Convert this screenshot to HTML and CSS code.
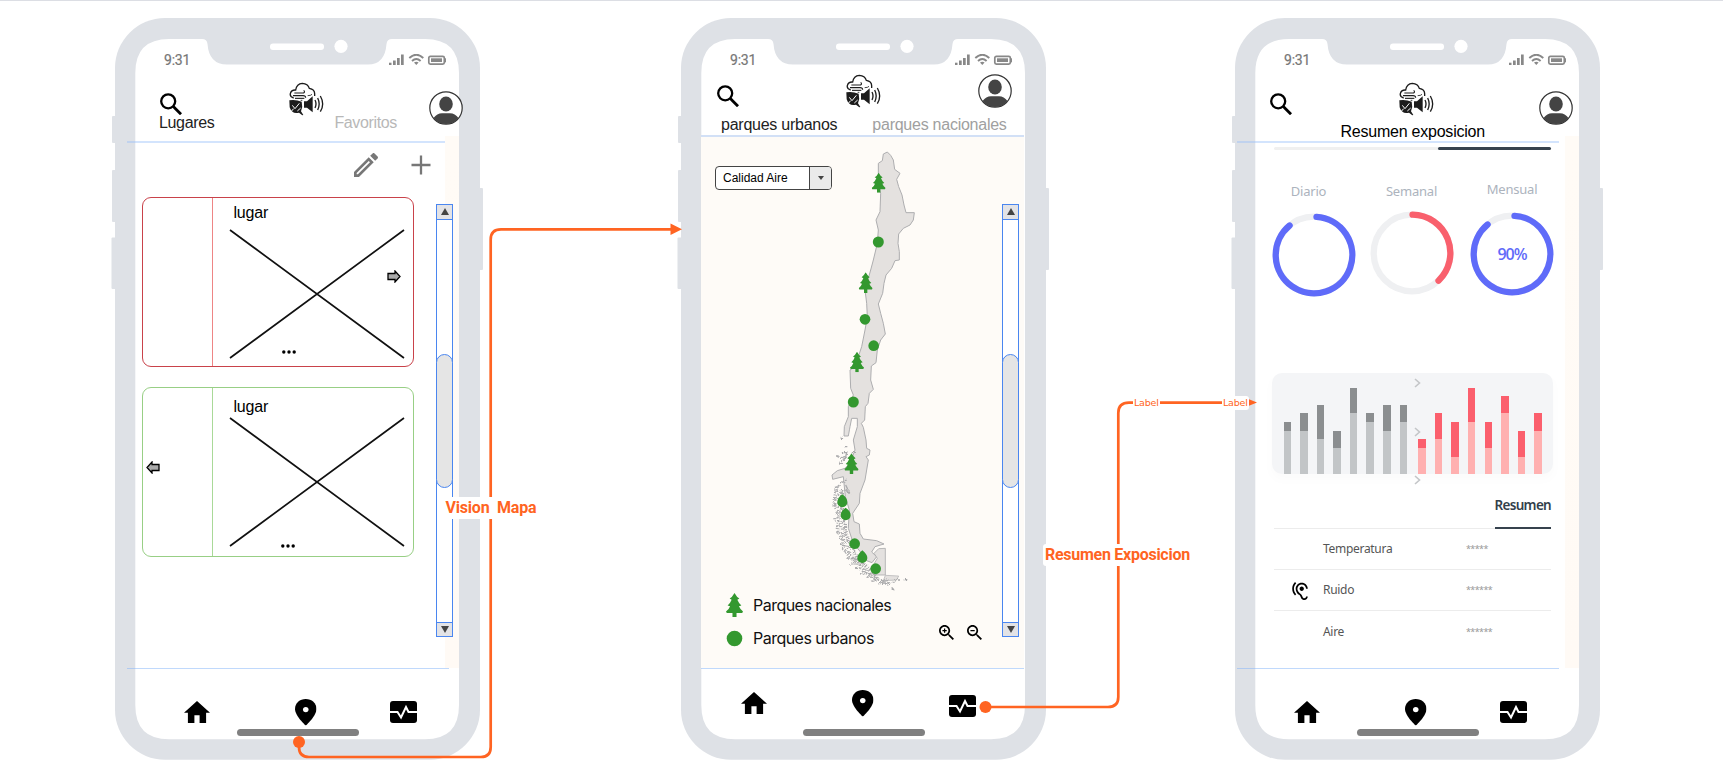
FILE: index.html
```html
<!DOCTYPE html>
<html lang="es">
<head>
<meta charset="utf-8">
<title>Prototipo</title>
<link rel="stylesheet" href="styles.css">
</head>
<body>
<svg class="defs" width="0" height="0">
  <defs>
    <symbol id="frame" viewBox="0 0 373 742">
      <g fill="#dee1e6">
        <rect x="1" y="98" width="10" height="27" rx="1"/><rect x="1" y="152" width="10" height="52" rx="1"/><rect x="0.5" y="219.500" width="10" height="51.500" rx="1"/>
        <rect x="362" y="170" width="10" height="82" rx="1"/>
        <rect x="4" y="0" width="365" height="741.700" rx="50"/>
      </g>
      <path fill="#fff" d="M58 21H91Q96 21 96.500 26Q98 46.500 116 46.500H257Q274 46.500 275.500 26Q276 21 281 21H314Q348 21 348 55V687Q348 721.300 314 721.300H58Q24.300 721.300 24.300 687V55Q24.300 21 58 21Z"/>
      <rect x="159" y="25.500" width="54" height="6.500" rx="3" fill="#fff"/><circle cx="230" cy="28.300" r="6.600" fill="#fff"/>
    </symbol>
    <symbol id="signals" viewBox="0 0 57 12">
      <g fill="#888"><rect x="0" y="8.700" width="2.500" height="2.300"/><rect x="4" y="6.500" width="2.700" height="4.500"/><rect x="8" y="4" width="2.700" height="7"/><rect x="12" y="0.500" width="2.700" height="10.500"/></g>
      <g fill="none" stroke="#888" stroke-width="1.900"><path d="M20.300 4Q27.300 -2.500 34.300 4"/><path d="M23 7Q27.300 3 31.600 7"/></g>
      <path d="M25 8.500Q27.300 7 29.600 8.500L27.300 11Z" fill="#888"/>
      <rect x="39.800" y="2.300" width="15.500" height="7.800" rx="1.500" fill="none" stroke="#888" stroke-width="1.700"/><rect x="42" y="4.300" width="11" height="3.700" fill="#888"/><rect x="56" y="4.300" width="1" height="4" fill="#888"/>
    </symbol>
    <symbol id="search" viewBox="0 0 22 22"><circle cx="8.200" cy="8.300" r="7" fill="none" stroke="#000" stroke-width="2.300"/><path d="M13.300 13.500L21 21.300" stroke="#000" stroke-width="2.800"/></symbol>
    <symbol id="logo" viewBox="0 0 105 100">
      <g fill="none" stroke="#1c1c1c" stroke-width="4">
        <path d="M14 47Q2 43 4 34Q7 22 20 23Q23 4 40 3Q57 4 61 18Q77 21 77 34V41" />
        <path d="M16 32H44Q49 29 44 24M12 40H42Q50 40 50 46" stroke-width="3.300"/><path d="M18 48H46" stroke-width="3.300"/><path d="M35 54H40M56 40Q66 40 69 36" stroke-width="2.500"/>
        <path d="M78 53Q84 65 78 77M86 47Q95 65 86 83M94 41Q108 65 94 88"/>
      </g>
      <path d="M1 54Q20 51 38 58Q42 72 36 87L43 98L40 99L30 91Q9 97 2 75Z" fill="#1c1c1c"/>
      <path d="M10 69L18 79L31 63M6 88L14 79M25 86L35 77" fill="none" stroke="#fff" stroke-width="3"/>
      <path d="M45 57H54L71 42V90L54 76H45Z" fill="#1c1c1c"/>
    </symbol>
    <symbol id="avatar" viewBox="0 0 34 34">
      <circle cx="17" cy="17" r="16.200" fill="#fff" stroke="#333" stroke-width="1.200"/>
      <ellipse cx="17" cy="13" rx="6.800" ry="7.600" fill="#444"/><path d="M4.500 27Q8 22.300 13 22.300H21Q26 22.300 29.500 27Q25 33 17 33T4.500 27Z" fill="#444"/>
    </symbol>
    <symbol id="home" viewBox="2 3 20 17" preserveAspectRatio="none"><path d="M10 20v-6h4v6h5v-8h3L12 3 2 12h3v8z"/></symbol>
    <symbol id="pin" viewBox="5 2 14 20" preserveAspectRatio="none"><path d="M12 2C8.130 2 5 5.130 5 9.500c0 5.250 7 12.500 7 12.500s7-7.250 7-12.500C19 5.130 15.870 2 12 2z"/><ellipse cx="12" cy="10" rx="1.800" ry="2" fill="#fff"/></symbol>
    <symbol id="pulse" viewBox="0 0 27 22"><rect width="27" height="22" rx="3"/><path d="M0 11H7.500L11 16.500L16 6L18.500 11H27" fill="none" stroke="#fff" stroke-width="2"/></symbol>
    <symbol id="tree" viewBox="0 0 42 60" preserveAspectRatio="none"><path fill="#33982f" d="M21 0Q27 11 33 14L28 17Q31 25 38 31L32 33Q36 42 42 46L40 50H26V60H16V50H2L0 46Q7 42 10 33L4 31Q11 25 14 17L9 14Q15 11 21 0Z"/></symbol>
    <symbol id="arrow" viewBox="0 0 14 13"><path d="M1 3.500H8V1L13 6.500L8 12V9.500H1Z" fill="#aaa" stroke="#000" stroke-width="1.300"/></symbol>
    <symbol id="chev" viewBox="0 0 7 10"><path d="M1 1L5.500 5L1 9" fill="none" stroke="#c4c6c8" stroke-width="1.600"/></symbol>
    <symbol id="zoom" viewBox="3 3 17.500 17.500"><path d="M15.500 14h-.79l-.28-.27C15.410 12.590 16 11.110 16 9.500 16 5.910 13.090 3 9.500 3S3 5.910 3 9.500 5.910 16 9.500 16c1.610 0 3.090-.59 4.230-1.570l.27.280v.79l5 4.990L20.490 19l-4.990-5zm-6 0C7.010 14 5 11.990 5 9.500S7.010 5 9.500 5 14 7.010 14 9.500 11.990 14 9.500 14zM7 8.700h5v1.600H7z"/></symbol>
    <filter id="rough" x="-20%" y="-20%" width="140%" height="140%"><feTurbulence type="fractalNoise" baseFrequency="0.3" numOctaves="2" seed="4"/><feDisplacementMap in="SourceGraphic" scale="11" xChannelSelector="R" yChannelSelector="G"/></filter>
    <filter id="coast" x="-10%" y="-10%" width="120%" height="120%"><feTurbulence type="fractalNoise" baseFrequency="0.15" numOctaves="2" seed="9"/><feDisplacementMap in="SourceGraphic" scale="4" xChannelSelector="R" yChannelSelector="G"/></filter>
  </defs>
</svg>

<main class="board">
  <section class="phone phone-1">
    <svg class="frame"><use href="#frame"/></svg>
    <div class="screen">
      <div class="status"><span>9:31</span><svg class="signals"><use href="#signals"/></svg></div>
      <header class="top">
        <div class="tools">
          <svg class="search"><use href="#search"/></svg>
          <svg class="logo"><use href="#logo"/></svg>
          <svg class="avatar"><use href="#avatar"/></svg>
        </div>
        <nav class="tabs"><span class="tab">Lugares</span><span class="tab off">Favoritos</span></nav>
      </header>
      <div class="body">
        <div class="list">
          <div class="actions">
            <svg width="24" height="24" viewBox="3 3 18 18"><path fill="#777" d="M14.060 9.020l.92.920L5.920 19H5v-.92l9.060-9.060M17.660 3c-.25 0-.51.100-.7.290l-1.830 1.830 3.750 3.750 1.830-1.830c.39-.39.39-1.020 0-1.410l-2.340-2.340c-.2-.2-.45-.29-.71-.29zm-3.600 3.190L3 17.250V21h3.750L17.810 9.940l-3.750-3.750z"/></svg>
            <svg width="20" height="20" viewBox="0 0 20 20"><path d="M10 0.500V19.500M0.500 10H19.500" stroke="#777" stroke-width="2.300"/></svg>
          </div>
          <article class="card red">
            <div class="side"></div>
            <div class="content">
              <h2>lugar</h2>
              <svg class="cross" viewBox="0 0 174 128"><path d="M0 0L174 128M174 0L0 128" stroke="#111" stroke-width="1.700"/></svg>
              <svg class="go"><use href="#arrow"/></svg>
              <svg class="dots" viewBox="0 0 14 4"><circle cx="1.800" cy="2" r="1.700"/><circle cx="7" cy="2" r="1.700"/><circle cx="12.200" cy="2" r="1.700"/></svg>
            </div>
          </article>
          <article class="card green">
            <div class="side"><svg class="back"><use href="#arrow"/></svg></div>
            <div class="content">
              <h2>lugar</h2>
              <svg class="cross" viewBox="0 0 174 128"><path d="M0 0L174 128M174 0L0 128" stroke="#111" stroke-width="1.700"/></svg>
              <svg class="dots" viewBox="0 0 14 4"><circle cx="1.800" cy="2" r="1.700"/><circle cx="7" cy="2" r="1.700"/><circle cx="12.200" cy="2" r="1.700"/></svg>
            </div>
          </article>
        </div>
        <div class="scrollbar"><span class="btn up"></span><span class="thumb"></span><span class="btn down"></span></div>
      </div>
      <footer class="bottom">
        <svg class="home"><use href="#home"/></svg><svg class="pin"><use href="#pin"/></svg><svg class="pulse"><use href="#pulse"/></svg>
      </footer>
      <div class="grip"></div>
    </div>
  </section>

  <section class="phone phone-2">
    <svg class="frame"><use href="#frame"/></svg>
    <div class="screen">
      <div class="status"><span>9:31</span><svg class="signals"><use href="#signals"/></svg></div>
      <header class="top">
        <div class="tools">
          <svg class="search"><use href="#search"/></svg>
          <svg class="logo"><use href="#logo"/></svg>
          <svg class="avatar"><use href="#avatar"/></svg>
        </div>
        <nav class="tabs"><span class="tab">parques urbanos</span><span class="tab off">parques nacionales</span></nav>
      </header>
      <div class="body map">
        <svg class="chile" viewBox="0 0 420 1410">
          <g filter="url(#coast)"><path fill="#e4e1df" stroke="#adadaf" stroke-width="3" stroke-linejoin="round" d="M235 70L247 62L250 42L262 36L272 46L280 60L284 88L300 100L290 118L296 140L306 165L312 195L318 218L343 218L340 240L330 255L310 265L296 282L294 310L298 335L298 360L285 362L275 385L258 405L252 430L248 460L235 492L242 520L250 550L256 582L242 600L232 630L228 668L214 678L212 720L220 748L208 760L204 790L196 800L194 840L184 850L190 862L198 900L200 925L210 930L208 945L198 950L205 960L200 990L195 1020L180 1060L178 1090L158 1120L162 1145L178 1152L180 1180L190 1197L230 1202L252 1212L225 1220L215 1236L230 1250L216 1268L200 1262L185 1240L160 1210L145 1165L148 1110L136 1070L130 1010L98 1018L96 1005L112 992L135 985L150 970L165 930L160 900L172 860L172 835L155 835L150 860L145 888L132 888L133 860L145 830L145 800L160 765L152 745L150 690L165 680L185 620L195 570L202 530L200 490L195 450L212 390L220 360L232 310L235 270L228 240L240 215L242 160L235 130Z"/>
          <path d="M256 1225V1305H222L240 1290L220 1275L232 1255L222 1240L236 1226Z" fill="#e4e1df" stroke="#adadaf" stroke-width="2.500"/><path d="M256 1306L296 1308L290 1320L250 1322Z" fill="#e4e1df" stroke="#adadaf" stroke-width="2"/></g>
          <g filter="url(#rough)" fill="none" stroke="#a9a9ab" stroke-width="3">
            <path d="M103 1045L118 1035L108 1060L130 1055L98 1080L124 1078L97 1098L128 1100L106 1120L135 1118L100 1140L132 1145L108 1160L140 1160L108 1178L138 1182L118 1198L148 1202L120 1215L150 1220L130 1235L162 1238L140 1255L175 1255L150 1272L188 1272L165 1285L200 1288L180 1302L218 1300L200 1312L236 1312L215 1324L262 1320L235 1332L288 1326" stroke-dasharray="26 3 13 4"/>
            <path d="M110 1040L103 1090L118 1130L112 1170L130 1200L128 1222L150 1250L175 1270L198 1296L230 1318L270 1334" stroke-width="11" stroke-dasharray="3 5"/>
            <path d="M128 1050L122 1090L137 1140L135 1175L155 1220L170 1252L205 1285L230 1308" stroke-width="11" stroke-dasharray="4 4"/>
            <path d="M122 895H130M135 920H142M124 938H140L136 955L112 950M125 965L140 950M154 938H166M108 948H116M118 970H126M275 1342L282 1350M310 1319H322M285 1320H300M120 1030L140 1020M137 1035L149 1060L135 1050" stroke-width="4"/>
          </g>
          <g fill="#33982f"><circle cx="235" cy="306" r="16.500"/><circle cx="195" cy="538" r="16"/><circle cx="221" cy="617" r="16"/><circle cx="160" cy="786" r="16.500"/><circle cx="164" cy="1211" r="16"/><circle cx="227" cy="1286" r="16"/>
          <path d="M127 1063Q142 1073 142 1087A15 15 0 0 1 112 1087Q112 1073 127 1063ZM137 1103Q152 1113 152 1126A15 15 0 0 1 122 1126Q122 1113 137 1103ZM187 1231Q202 1243 202 1254A15 15 0 0 1 172 1254Q172 1243 187 1231Z"/></g>
          <use href="#tree" x="215" y="98" width="42" height="60"/><use href="#tree" x="176" y="397" width="42" height="62"/><use href="#tree" x="150" y="635" width="42" height="62"/><use href="#tree" x="133" y="940" width="43" height="62"/>
        </svg>
        <div class="select"><span>Calidad Aire</span><i></i></div>
        <ul class="legend">
          <li><svg width="17" height="24"><use href="#tree"/></svg>Parques nacionales</li>
          <li><svg width="17" height="17" viewBox="0 0 17 17"><circle cx="8.500" cy="8.500" r="7.800" fill="#33982f"/></svg>Parques urbanos</li>
        </ul>
        <div class="zooms"><svg viewBox="0 0 15 15"><use href="#zoom"/><path d="M5.600 3.400V7.700" stroke="#000" stroke-width="1.200"/></svg><svg viewBox="0 0 15 15"><use href="#zoom"/></svg></div>
        <div class="scrollbar"><span class="btn up"></span><span class="thumb"></span><span class="btn down"></span></div>
      </div>
      <footer class="bottom">
        <svg class="home"><use href="#home"/></svg><svg class="pin"><use href="#pin"/></svg><svg class="pulse"><use href="#pulse"/></svg>
      </footer>
      <div class="grip"></div>
    </div>
  </section>

  <section class="phone phone-3">
    <svg class="frame"><use href="#frame"/></svg>
    <div class="screen">
      <div class="status"><span>9:31</span><svg class="signals"><use href="#signals"/></svg></div>
      <header class="top">
        <div class="tools">
          <svg class="search"><use href="#search"/></svg>
          <svg class="logo"><use href="#logo"/></svg>
          <svg class="avatar"><use href="#avatar"/></svg>
        </div>
        <h1 class="tabs">Resumen exposicion</h1>
      </header>
      <div class="body report">
        <div class="progress"><span></span></div>
        <div class="rings">
          <figure><figcaption>Diario</figcaption><svg viewBox="0 0 84 84"><circle cx="42" cy="42" r="38.300" stroke="#eff0f2"/><path d="M44.500 3.800A38.300 38.300 0 1 1 17.600 12.500" stroke="#5f6bf9"/></svg></figure>
          <figure><figcaption>Semanal</figcaption><svg viewBox="0 0 84 84"><circle cx="42" cy="42" r="38.300" stroke="#eff0f2"/><path d="M42.500 3.700A38.300 38.300 0 0 1 68.500 69.700" stroke="#f9606d"/></svg></figure>
          <figure class="raised"><figcaption>Mensual</figcaption><svg viewBox="0 0 84 84"><circle cx="42" cy="42" r="38.300" stroke="#eff0f2"/><path d="M44.500 3.800A38.300 38.300 0 1 1 17.600 12.500" stroke="#5f6bf9"/></svg><b>90%</b></figure>
        </div>
        <div class="chart">
          <div class="bars gray">
            <i style="--t:6;--l:5"></i><i style="--t:7;--l:5"></i><i style="--t:8;--l:4"></i><i style="--t:5;--l:3"></i><i style="--t:10;--l:7"></i><i style="--t:7;--l:6"></i><i style="--t:8;--l:5"></i><i style="--t:8;--l:6"></i>
          </div>
          <div class="bars pink">
            <i style="--t:4;--l:3"></i><i style="--t:7;--l:4"></i><i style="--t:6;--l:2"></i><i style="--t:10;--l:6"></i><i style="--t:6;--l:3"></i><i style="--t:9;--l:7"></i><i style="--t:5;--l:2"></i><i style="--t:7;--l:5"></i>
          </div>
          <div class="chevs"><svg><use href="#chev"/></svg><svg><use href="#chev"/></svg><svg><use href="#chev"/></svg></div>
        </div>
        <div class="caption"><span>Resumen</span></div>
        <div class="row"><span></span><span>Temperatura</span><em>*****</em></div>
        <div class="row"><svg width="16" height="18" viewBox="3 1.200 18 20.800"><path d="M17 20c-.29 0-.56-.06-.76-.15-.71-.37-1.210-.88-1.710-2.380-.51-1.560-1.470-2.290-2.390-3-.79-.61-1.610-1.240-2.320-2.530C9.290 10.980 9 9.930 9 9c0-2.800 2.200-5 5-5s5 2.200 5 5h2c0-3.930-3.070-7-7-7S7 5.070 7 9c0 1.260.38 2.650 1.070 3.900.91 1.650 1.980 2.480 2.850 3.150.81.620 1.390 1.070 1.710 2.050.6 1.820 1.370 2.840 2.730 3.550.51.230 1.070.35 1.640.35 2.210 0 4-1.790 4-4h-2c0 1.100-.9 2-2 2zM7.640 2.640L6.220 1.220C4.230 3.210 3 5.960 3 9s1.230 5.790 3.220 7.780l1.410-1.410C6.010 13.740 5 11.490 5 9s1.010-4.740 2.640-6.360zM11.500 9c0 1.380 1.120 2.500 2.500 2.500s2.500-1.120 2.500-2.500-1.120-2.500-2.500-2.500-2.500 1.120-2.500 2.500z"/></svg><span>Ruido</span><em>******</em></div>
        <div class="row"><span></span><span>Aire</span><em>******</em></div>
      </div>
      <footer class="bottom">
        <svg class="home"><use href="#home"/></svg><svg class="pin"><use href="#pin"/></svg><svg class="pulse"><use href="#pulse"/></svg>
      </footer>
      <div class="grip"></div>
    </div>
  </section>

  <svg class="links" viewBox="0 0 1723 782">
    <g fill="none" stroke="#ff6422" stroke-width="2.700"><path d="M299 742V747Q299 757 309 757H481Q490.700 757 490.700 747V239.500Q490.700 229.300 501 229.300H672"/><path d="M985.500 707H1108Q1118.300 707 1118.300 697V413Q1118.300 402.600 1129 402.600H1252"/></g>
    <g fill="#ff6422"><circle cx="299" cy="742" r="6"/><circle cx="985.500" cy="707" r="6"/><path d="M670.500 223.500L682 229.300L670.500 235ZM1249 399.300L1257 402.600L1249 405.800Z"/></g>
  </svg>
  <span class="label vision">Vision&nbsp; Mapa</span>
  <span class="label resumen">Resumen Exposicion</span>
  <span class="label small one">Label</span>
  <span class="label small two">Label</span>
</main>
</body>
</html>
```
FILE: styles.css
```css
* { box-sizing: border-box; }
body { margin: 0; background: #fff; font-family: "Liberation Sans", Arial, sans-serif; }
.defs { position: absolute; }
svg { display: block; flex: none; overflow: visible; }
.board { position: relative; width: 1723px; height: 782px; overflow: hidden; border-top: 1px solid #dcdee4; }

/* Phones placed on the free canvas */
.phone { position: absolute; top: 17px; width: 373px; height: 742px; padding: 21px 25px 0 24px; }
.phone-1 { left: 111px; }
.phone-2 { left: 677px; }
.phone-3 { left: 1231px; }
.frame { position: absolute; left: 0; top: 0; width: 373px; height: 742px; }
.screen { position: relative; display: flex; flex-direction: column; width: 324px; height: 700px; }

.status { display: flex; justify-content: space-between; align-items: center; height: 36px; padding: 6px 13px 0 29px; color: #777; font: 400 14px/16px Roboto, sans-serif; }
.status span { letter-spacing: -.2px; -webkit-text-stroke: .2px #777; }
.signals { width: 57px; height: 12px; }

.top { height: 68px; border-bottom: 2px solid rgba(150, 190, 250, .42); margin: 0 10px 0 -8px; padding-left: 8px; flex: none; }
.tools { display: flex; height: 34px; align-items: flex-start; }
.search { width: 22px; height: 22px; margin: 18px 0 0 25px; }
.logo { width: 35px; height: 34px; margin: 7px 0 0 107px; }
.avatar { width: 34px; height: 34px; margin: 16px 0 0 105px; }
.tabs { position: relative; display: flex; margin: 0; height: 24px; font-size: 16px; font-weight: 400; line-height: 18px; letter-spacing: -.35px; color: #222; white-space: nowrap; }
.phone-1 .top { margin-right: 9px; }
.phone-1 .tabs { padding: 5px 0 0 24px; gap: 120px; }
.off { color: #b8b8b8; }

.body { position: relative; display: flex; height: 525px; flex: none; }
.phone-1 .body, .phone-3 .body { background: linear-gradient(#fffbf6, #fffaf5) no-repeat 310px 0 / 14px 100%; }
.phone-1 .body::before, .phone-3 .body::before { content: ""; position: absolute; right: 0; top: -7px; width: 14px; height: 7px; background: #fffbf6; }

.list { width: 301px; padding-left: 7px; display: flex; flex-direction: column; gap: 20px; }
.actions { display: flex; align-items: center; gap: 33px; height: 34px; padding: 9px 0 0 212px; }
.card { display: flex; width: 271.500px; height: 170px; border: 1px solid; border-radius: 9px; background: #fff; }
.red { border-color: #c9424a; --line: #ee8585; }
.green { border-color: #98cf85; --line: #a9d998; }
.side { width: 70px; border-right: 1.500px solid var(--line); }
.content { position: relative; flex: 1; padding: 6px 0 0 17px; }
.card h2 { margin: 0 0 0 3.500px; height: 26px; font-size: 16px; font-weight: 400; line-height: 18px; letter-spacing: -.2px; }
.green h2 { padding-top: 5px; }
.green .content { padding-top: 5px; }
.green .cross { margin-top: -1px; }
.cross { width: 174px; height: 128px; }
.go { position: absolute; right: 12px; top: 72px; width: 14px; height: 13px; }
.back { width: 14px; height: 13px; margin: 73px 0 0 3px; transform: scaleX(-1); }
.dots { position: absolute; left: 69px; bottom: 12px; width: 14px; height: 4px; }
.green .dots { left: 68px; bottom: 8px; }

.scrollbar { display: flex; flex-direction: column; width: 17px; height: 433px; margin-top: 61px; border: 1.500px solid #4a86f0; background: #fff; flex: none; }
.btn { height: 14.500px; background: #e3e3e6; display: flex; align-items: center; justify-content: center; }
.btn::after { content: ""; border: 4.300px solid transparent; }
.up { border-bottom: 1px solid #4a86f0; }
.down { border-top: 1px solid #4a86f0; margin-top: auto; }
.up::after { border-bottom: 7px solid #444; border-top: 0; }
.down::after { border-top: 7px solid #444; border-bottom: 0; }
.thumb { height: 134px; margin: 134px -1px 0; border: 1px solid #4a86f0; border-radius: 9px; background: #e5e5e5; }

.bottom { display: flex; align-items: flex-start; height: 61px; margin: 0 10px 0 -8px; padding: 31px 0 0 57px; border-top: 1.500px solid rgba(130, 180, 250, .5); }
.home { width: 26px; height: 22px; margin-top: 1px; }
.pin { width: 21.500px; height: 26.500px; margin: -1px 0 0 85px; }
.pulse { width: 27px; height: 22px; margin: 1px 0 0 73px; }
.grip { width: 122px; height: 7px; margin-left: 102px; border-radius: 4px; background: #808080; }

/* Map screen */
.phone-2 .top, .phone-2 .bottom { margin: 0 1px 0 0; padding-left: 0; }
.phone-2 .top { height: 62px; border-color: #d2e0f6; }
.phone-2 .search { margin: 10px 0 0 16px; }
.phone-2 .logo { margin: -1px 0 0 107px; }
.phone-2 .avatar { margin: -1px 0 0 96.500px; }
.phone-2 .tabs { padding: 7px 0 0 20px; gap: 35px; letter-spacing: -.25px; }
.phone-2 .off { color: #a0a0a0; }
.phone-2 .body { height: 531px; }
.map { background: #fefbf7; margin: 0 1px 0 0; }
.chile { position: absolute; left: 99px; top: 3px; width: 140px; height: 470px; }
.select { position: absolute; left: 14px; top: 29px; width: 117px; height: 24px; display: flex; border: 1px solid #444; border-radius: 4px; background: #fff; font-size: 12px; line-height: 23px; overflow: hidden; }
.select span { flex: 1; padding-left: 7px; }
.select i { width: 22px; border-left: 1px solid #444; background: #eaeaea; display: flex; align-items: center; justify-content: center; }
.select i::after { content: ""; border: 3.500px solid transparent; border-top: 4px solid #444; border-bottom: 0; }
.legend { position: absolute; left: 25px; top: 456px; margin: 0; padding: 0; list-style: none; font: 16px/24px Inter, sans-serif; letter-spacing: -.52px; color: #111; }
.legend li { display: flex; align-items: center; gap: 10px; height: 24px; margin-bottom: 9px; white-space: nowrap; }
.zooms { position: absolute; left: 238px; top: 488px; display: flex; gap: 13px; }
.zooms svg { width: 15px; height: 15px; }
.map .scrollbar { margin: 67px 0 0 301px; }
.phone-2 .bottom { padding: 22px 0 0 40px; height: 61px; }
.phone-2 .pulse { margin: 4px 0 0 75px; }

/* Report screen */
.phone-3 .top { margin: 0 20px 0 -18px; padding-left: 18px; }
.phone-3 .search { margin-left: 15px; }
.phone-3 h1 { padding: 14px 0 0 85.500px; color: #000; letter-spacing: -.23px; }
.phone-3 .bottom { margin: 0 20px 0 -18px; }
.report { flex-direction: column; padding: 4px 28px 0 19px; font-family: "Noto Sans", "Open Sans", sans-serif; }
.progress { height: 3px; border-radius: 2px; background: #f0f0f0; flex: none; }
.progress span { display: block; width: 113px; height: 3px; margin-left: auto; border-radius: 2px; background: #36424e; }
.rings { display: flex; gap: 14px; margin: 32px 0 0 -2.500px; height: 190.500px; flex: none; }
.rings figure { position: relative; margin: 0; width: 84px; }
.rings figcaption { height: 30.500px; font-size: 13px; line-height: 18px; letter-spacing: -.2px; color: #acb3bd; text-align: center; }
.rings figure:first-child figcaption { padding-right: 10px; }
.rings svg { width: 84px; height: 84px; fill: none; stroke-width: 6.300px; stroke-linecap: round; }
.rings figure:nth-child(2) svg { margin-top: -1.500px; }
.rings .raised { margin: -2px 0 0 2.500px; }
.raised svg { margin-top: 1px; }
.rings b { position: absolute; left: 0; right: 0; top: 62.500px; font: 600 16px/22px "Open Sans", sans-serif; letter-spacing: -1px; color: #5f6bf9; text-align: center; }
.chart { position: relative; display: flex; align-items: flex-end; gap: 11px; width: 281px; height: 101.500px; margin-left: -2px; padding-left: 11.500px; border-radius: 10px; background: #f4f5f7; box-shadow: 0 5px 8px rgba(120, 130, 140, .03); flex: none; }
.bars { display: flex; align-items: flex-end; gap: 9.100px; }
.bars i { width: 7.500px; height: calc(var(--t) * 8.650px); background: linear-gradient(to top, var(--light) calc(var(--l) * 8.650px), var(--dark) 0); }
.gray { --light: #c2c5c7; --dark: #8b8e90; }
.pink { --light: #ffb0b0; --dark: #fb5f6d; }
.chevs { position: absolute; left: 142px; top: 5.500px; display: flex; flex-direction: column; gap: 38.500px; }
.chevs svg { width: 7px; height: 10px; }
.caption { display: flex; justify-content: flex-end; height: 54.500px; border-bottom: 1px solid #ececec; flex: none; }
.caption span { height: 55px; padding-top: 21px; border-bottom: 2px solid #36424e; font-size: 13.500px; line-height: 20px; font-weight: 600; letter-spacing: -.7px; color: #333f4b; }
.row { display: grid; grid-template-columns: 49px 143px 1fr; align-items: center; height: 41px; border-bottom: 1px solid #ececec; font-size: 12px; letter-spacing: -.3px; color: #555; flex: none; }
.row:last-child { border: 0; }
.row svg { margin: 3px 0 0 18px; }
.row em { font-style: normal; font-size: 9px; letter-spacing: -.6px; color: #999; }

/* Connectors over the canvas */
.links { position: absolute; left: 0; top: -1px; width: 1723px; height: 782px; }
.label { position: absolute; padding: 0 2px; border-radius: 3px; background: #fff; color: #ff6422; font: 700 16px/22px Roboto, sans-serif; white-space: nowrap; }
.vision { left: 443.500px; top: 496px; letter-spacing: -.2px; }
.resumen { left: 1043px; top: 543px; letter-spacing: -.27px; }
.small { font: 9.500px/14px "DejaVu Sans", sans-serif; padding: 0 1px; letter-spacing: -.2px; }
.one { left: 1133px; top: 395px; }
.two { left: 1222px; top: 395px; }
```
